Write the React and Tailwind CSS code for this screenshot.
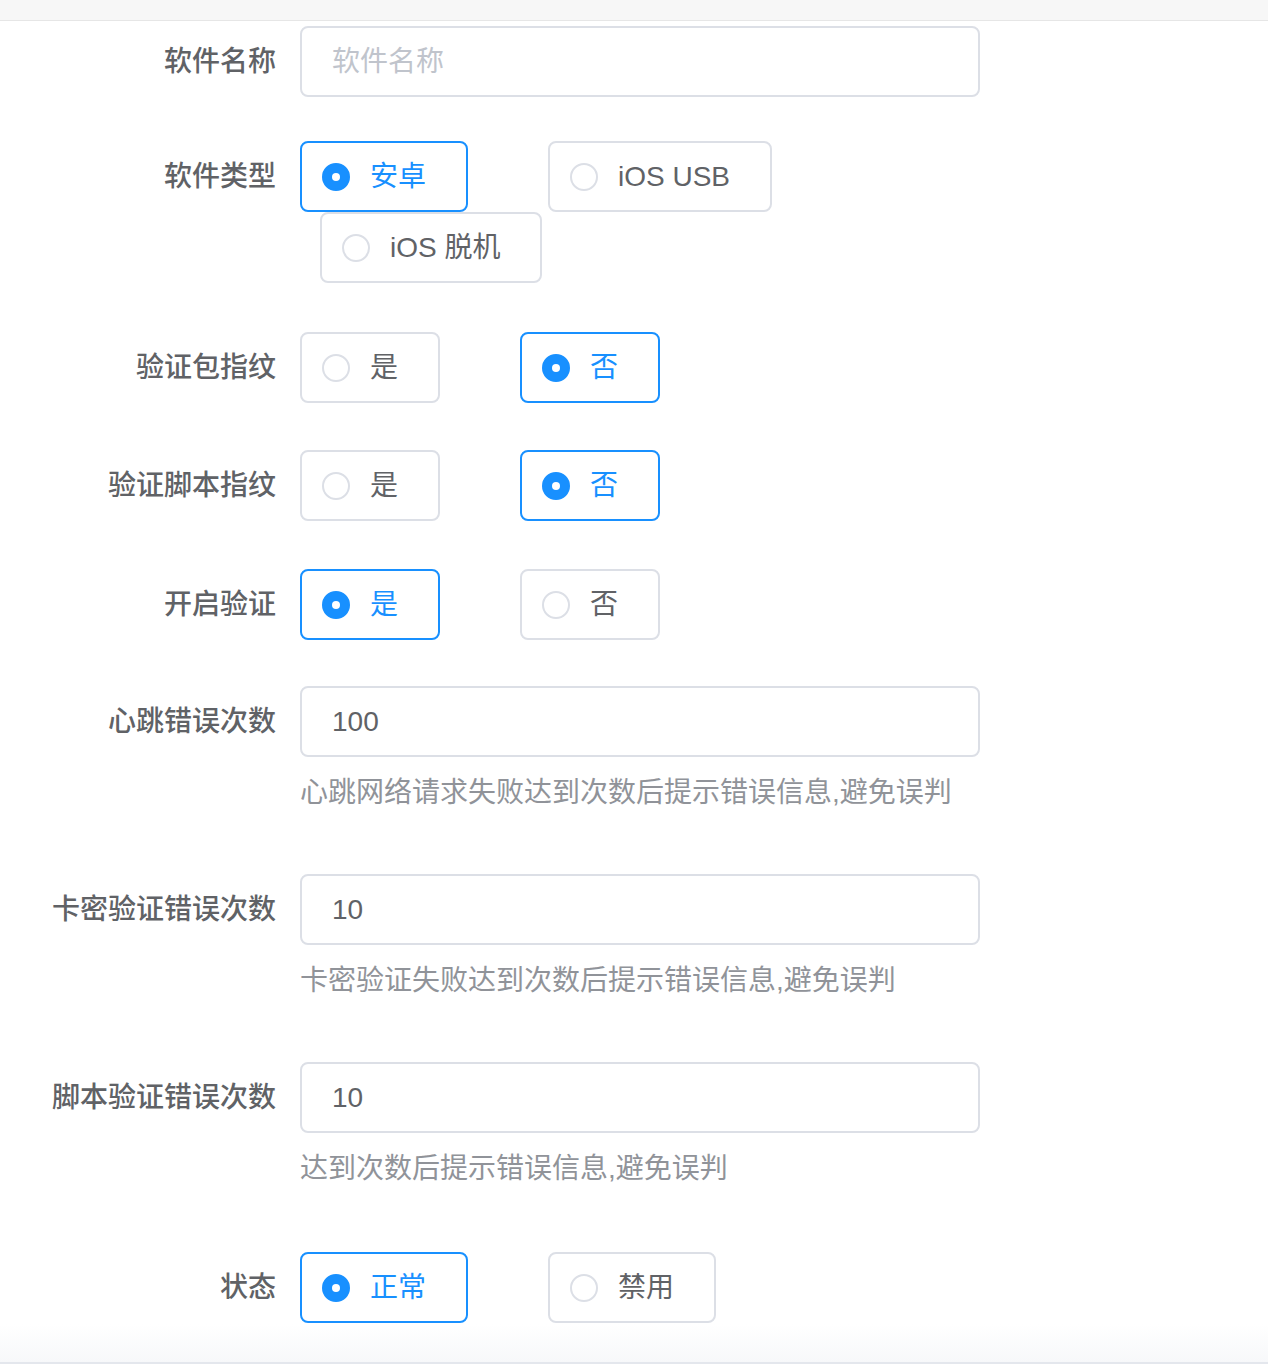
import React, { useState } from 'react'

const FONT = { fontFamily: '"Liberation Sans", "Noto Sans CJK SC", sans-serif' }

function Radio({ label, checked, first, onClick }) {
  return (
    <label
      onClick={onClick}
      className={`box-border flex h-[71px] cursor-pointer items-center rounded-[8px] border-2 pl-[20px] pr-[40px] mr-[60px] ${first ? '' : 'ml-[20px]'} ${checked ? 'border-[#1890ff]' : 'border-[#dcdfe6]'}`}
    >
      <span
        className={`box-border flex h-[28px] w-[28px] items-center justify-center rounded-full border-2 ${checked ? 'border-[#1890ff] bg-[#1890ff]' : 'border-[#dcdfe6] bg-white'}`}
      >
        {checked && <span className="h-[8px] w-[8px] rounded-full bg-white" />}
      </span>
      <span className={`pl-[20px] text-[28px] leading-none ${checked ? 'text-[#1890ff]' : 'text-[#606266]'}`}>{label}</span>
    </label>
  )
}

function RadioGroup({ options, value, onChange }) {
  return (
    <div className="flex flex-wrap">
      {options.map((o, i) => (
        <Radio key={o} label={o} first={i === 0} checked={value === o} onClick={() => onChange(o)} />
      ))}
    </div>
  )
}

function Item({ label, children, className = '' }) {
  return (
    <div className={`flex ${className}`}>
      <div className="w-[276px] shrink-0 text-right text-[28px] font-medium leading-[71px] text-[#606266]">{label}</div>
      <div className="ml-[24px] w-[680px]">{children}</div>
    </div>
  )
}

function Input({ value, placeholder }) {
  return (
    <input
      defaultValue={value}
      placeholder={placeholder}
      className="box-border block h-[71px] w-full rounded-[8px] border-2 border-[#dcdfe6] px-[30px] text-[28px] text-[#606266] outline-none placeholder:text-[#c0c4cc]"
      style={FONT}
    />
  )
}

function Help({ children }) {
  return <div className="mt-[14px] text-[28px] leading-[44px] text-[#909399]">{children}</div>
}

export default function App() {
  const [type, setType] = useState('安卓')
  const [pkg, setPkg] = useState('否')
  const [script, setScript] = useState('否')
  const [verify, setVerify] = useState('是')
  const [status, setStatus] = useState('正常')

  return (
    <div className="relative h-[1364px] w-full overflow-hidden bg-white" style={FONT}>
      <div className="h-[21px] border-b border-[#e6e6e6] bg-[#f7f7f7]" />
      <div className="pt-[5px]">
        <Item label="软件名称" className="mb-[44px]">
          <Input placeholder="软件名称" />
        </Item>
        <Item label="软件类型" className="mb-[49px]">
          <RadioGroup options={['安卓', 'iOS USB', 'iOS 脱机']} value={type} onChange={setType} />
        </Item>
        <Item label="验证包指纹" className="mb-[47px]">
          <RadioGroup options={['是', '否']} value={pkg} onChange={setPkg} />
        </Item>
        <Item label="验证脚本指纹" className="mb-[48px]">
          <RadioGroup options={['是', '否']} value={script} onChange={setScript} />
        </Item>
        <Item label="开启验证" className="mb-[46px]">
          <RadioGroup options={['是', '否']} value={verify} onChange={setVerify} />
        </Item>
        <Item label="心跳错误次数" className="mb-[59px]">
          <Input value="100" />
          <Help>心跳网络请求失败达到次数后提示错误信息,避免误判</Help>
        </Item>
        <Item label="卡密验证错误次数" className="mb-[59px]">
          <Input value="10" />
          <Help>卡密验证失败达到次数后提示错误信息,避免误判</Help>
        </Item>
        <Item label="脚本验证错误次数" className="mb-[61px]">
          <Input value="10" />
          <Help>达到次数后提示错误信息,避免误判</Help>
        </Item>
        <Item label="状态">
          <RadioGroup options={['正常', '禁用']} value={status} onChange={setStatus} />
        </Item>
      </div>
      <div className="absolute inset-x-0 bottom-0 h-[40px] border-b-2 border-[#e4e7ed] bg-gradient-to-b from-white to-[#f7f8fa]" />
    </div>
  )
}
